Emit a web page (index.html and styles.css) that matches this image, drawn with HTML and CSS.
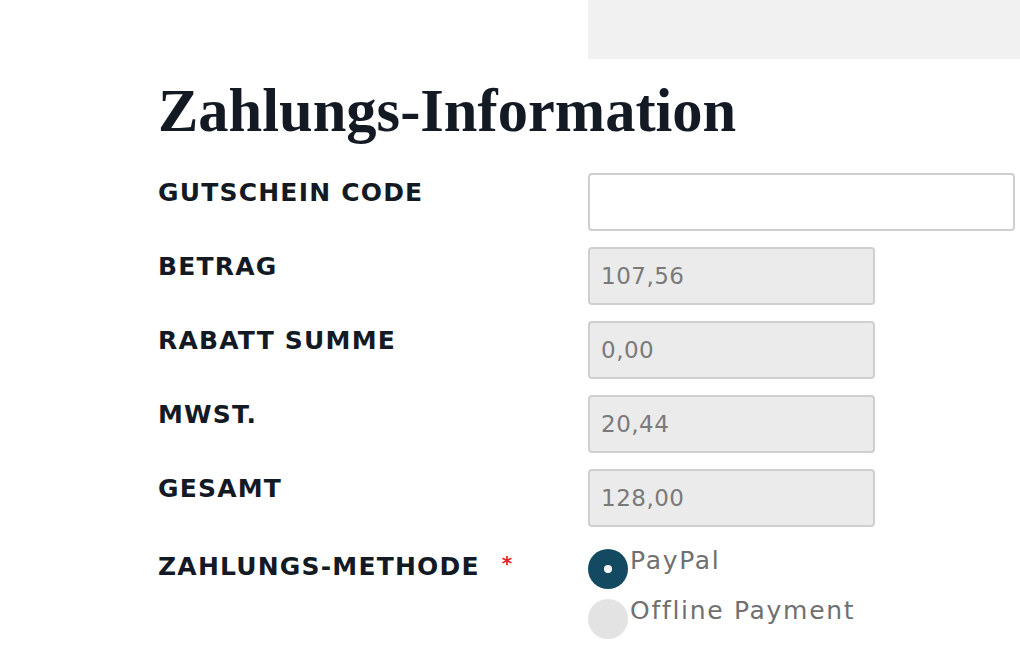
FILE: index.html
```html
<!DOCTYPE html>
<html lang="de">
<head>
<meta charset="utf-8">
<link rel="stylesheet" href="styles.css">
</head>
<body>
<div class="top-bar"></div>
<section class="payment">
  <h2 class="title">Zahlungs-Information</h2>
  <div class="form">
    <label class="label">GUTSCHEIN CODE</label>
    <div class="field"><input class="input wide" type="text"></div>

    <label class="label">BETRAG</label>
    <div class="field"><div class="input readonly">107,56</div></div>

    <label class="label">RABATT SUMME</label>
    <div class="field"><div class="input readonly">0,00</div></div>

    <label class="label">MWST.</label>
    <div class="field"><div class="input readonly">20,44</div></div>

    <label class="label">GESAMT</label>
    <div class="field"><div class="input readonly">128,00</div></div>

    <label class="label">ZAHLUNGS-METHODE <span class="req">*</span></label>
    <div class="field radios">
      <div class="radio"><span class="dot checked"></span><span class="rtext">PayPal</span></div>
      <div class="radio"><span class="dot"></span><span class="rtext">Offline Payment</span></div>
    </div>
  </div>
</section>
</body>
</html>
```
FILE: styles.css
```css
html, body { margin: 0; padding: 0; background: #fff; }
body { width: 1020px; height: 654px; overflow: hidden; }
.top-bar { margin-left: 588px; height: 59px; background: #f1f1f1; }
.payment { padding-left: 158px; }
.title {
  margin: 16px 0 0 0;
  font-family: "Liberation Serif", serif;
  font-weight: 700;
  font-size: 60.5px;
  line-height: 72px;
  color: #141a24;
}
.form {
  margin-top: 26px;
  display: grid;
  grid-template-columns: 430px 1fr;
  row-gap: 16px;
}
.label {
  font-family: "DejaVu Sans", sans-serif;
  font-weight: 700;
  font-size: 25px;
  color: #141a24;
  padding-top: 6px;
  line-height: 28px;
  letter-spacing: 1.2px;
}
.req {
  color: #e0202a;
  margin-left: 12px;
  font-size: 20px;
  vertical-align: 5px;
}
.field { display: flex; }
.input {
  box-sizing: border-box;
  height: 58px;
  width: 287px;
  border: 2px solid #cfcfcf;
  border-radius: 4px;
  font-family: "DejaVu Sans", sans-serif;
  font-size: 23px;
  color: #7a7a7a;
  padding: 0 11px;
  display: flex;
  align-items: center;
  letter-spacing: 0.5px;
}
.input.wide { width: 427px; background: #fff; outline: none; }
.readonly { background: #ebebeb; }
.radios { flex-direction: column; gap: 10px; padding-top: 6px; }
.radio { display: flex; align-items: flex-start; }
.dot {
  width: 40px; height: 40px; border-radius: 50%;
  background: #e3e3e3; flex: none; position: relative;
}
.dot.checked { background: #134a62; }
.dot.checked::after {
  content: ""; position: absolute; left: 16px; top: 16px;
  width: 8px; height: 8px; border-radius: 50%; background: #fff;
}
.rtext {
  font-family: "DejaVu Sans", sans-serif;
  font-size: 25px;
  color: #707070;
  line-height: 28px;
  margin-left: 2px;
  margin-top: -2px;
  letter-spacing: 1.7px;
}
```
